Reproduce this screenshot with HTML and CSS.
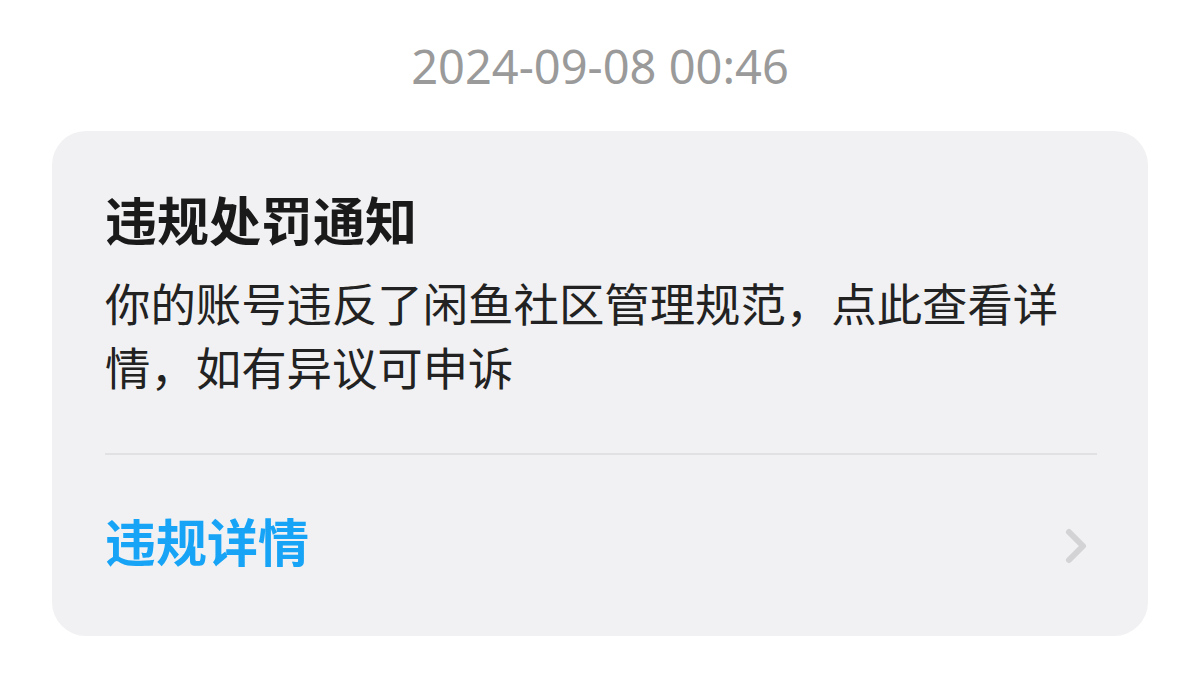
FILE: index.html
```html
<!DOCTYPE html>
<html lang="zh-CN">
<head>
<meta charset="utf-8">
<title>违规处罚通知</title>
<link rel="stylesheet" href="styles.css">
</head>
<body>
<div class="page">
  <div class="time">2024-09-08 00:46</div>
  <div class="card">
    <div class="title">违规处罚通知</div>
    <div class="desc">你的账号违反了闲鱼社区管理规范，点此查看详情，如有异议可申诉</div>
    <div class="divider"></div>
    <div class="link-row">
      <span class="link">违规详情</span>
      <svg class="chev" width="26" height="40" viewBox="0 0 26 40"><polyline points="6,6 20,20 6,34" fill="none" stroke="#d3d3d6" stroke-width="6" stroke-linecap="round" stroke-linejoin="round"/></svg>
    </div>
  </div>
</div>
</body>
</html>
```

FILE: styles.css
```css
html, body {
  margin: 0;
  padding: 0;
  background: #ffffff;
}
body {
  font-family: "Noto Sans CJK SC", "Noto Sans", sans-serif;
}
.page {
  width: 1200px;
  height: 691px;
  box-sizing: border-box;
  padding: 40px 52px 0 52px;
}
.time {
  font-family: "Noto Sans", "Roboto", sans-serif;
  text-align: center;
  color: #9a9a9a;
  font-size: 47px;
  line-height: 52px;
  height: 52px;
  margin-bottom: 39px;
}
.card {
  background: #f1f1f3;
  border-radius: 34px;
  padding: 56px 51px 0 53px;
  height: 505px;
  box-sizing: border-box;
}
.title {
  font-size: 52px;
  font-weight: 700;
  color: #1a1a1a;
  line-height: 64px;
}
.desc {
  margin-top: 19px;
  font-size: 45.4px;
  line-height: 64px;
  color: #222222;
}
.divider {
  margin-top: 55px;
  height: 2px;
  background: #e1e1e4;
}
.link-row {
  height: 181px;
  box-sizing: border-box;
  padding-bottom: 12px;
  display: flex;
  align-items: center;
  justify-content: space-between;
}
.link {
  font-size: 51px;
  font-weight: 700;
  color: #17a4f6;
  line-height: 64px;
}
.chev {
  margin-right: 8px;
  margin-top: 12px;
}
```
